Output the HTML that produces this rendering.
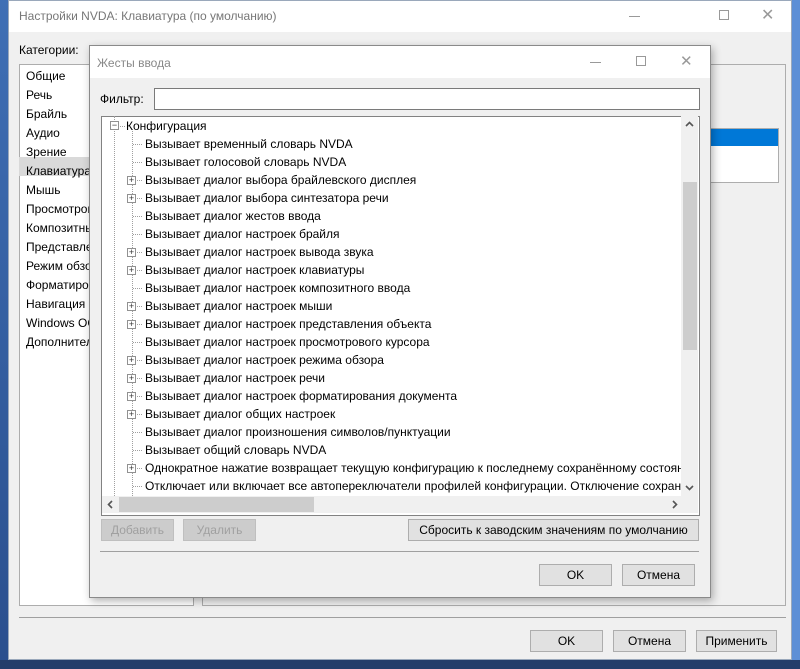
<!DOCTYPE html>
<html><head><meta charset="utf-8"><style>
*{box-sizing:border-box;margin:0;padding:0}
body{width:800px;height:669px;overflow:hidden;position:relative;font-family:"Liberation Sans","DejaVu Sans",sans-serif;font-size:12px;color:#000;background:#1d3660}
.abs{position:absolute}
.btn{position:absolute;background:#e1e1e1;border:1px solid #adadad;text-align:center;line-height:20px;font-size:12px}
.dis{color:#a0a0a0;background:#cccccc;border-color:#bfbfbf}
.row{position:absolute;left:145px;white-space:nowrap;height:18px;line-height:18px}
.pb{position:absolute;left:127px;width:9px;height:9px;border:1px solid #919191;background:#fff;font-size:9px;line-height:7px;text-align:center;color:#333}
.dh{position:absolute;left:133px;width:9px;border-top:1px dotted #a0a0a0}
</style></head><body>
<div class="abs" style="left:0;top:0;width:8px;height:660px;background:linear-gradient(#3f6fb5,#2a4f8e)"></div>
<div class="abs" style="left:792px;top:0;width:8px;height:660px;background:#5d8fd6"></div>
<div class="abs" style="left:0;top:660px;width:800px;height:9px;background:#243e6a"></div>
<div class="abs" style="left:8px;top:0;width:784px;height:660px;background:#f0f0f0;border:1px solid #9aa8bb">
 <div class="abs" style="left:0;top:0;width:782px;height:31px;background:#fff"></div>
 <div class="abs" style="left:10px;top:8px;font-size:12px;color:#777">Настройки NVDA: Клавиатура (по умолчанию)</div>
 <div class="abs" style="left:620px;top:15px;width:11px;border-top:1px solid #999"></div>
 <div class="abs" style="left:710px;top:9px;width:10px;height:10px;border:1px solid #999"></div>
 <div class="abs" style="left:752px;top:4px;font-size:16px;color:#999">✕</div>
 <div class="abs" style="left:10px;top:42px;">Категории:</div>
 <div class="abs" style="left:10px;top:63px;width:175px;height:542px;background:#fff;border:1px solid #adadad"></div>
 <div class="abs" style="left:193px;top:63px;width:584px;height:542px;border:1px solid #adadad"></div>
 <div class="abs" style="left:10px;top:156px;width:80px;height:19px;background:#d9d9d9"></div>
 <div class="abs" style="left:17px;top:66px;line-height:19px;font-size:12px">Общие<br>Речь<br>Брайль<br>Аудио<br>Зрение<br>Клавиатура<br>Мышь<br>Просмотровый<br>Композитный<br>Представление<br>Режим обзора<br>Форматирование<br>Навигация по<br>Windows OCR<br>Дополнительно</div>
 <div class="abs" style="left:690px;top:127px;width:80px;height:55px;border:1px solid #adadad;background:#fff"></div>
 <div class="abs" style="left:691px;top:128px;width:78px;height:17px;background:#0078d7"></div>
 <div class="abs" style="left:10px;top:616px;width:767px;border-top:1px solid #a0a0a0"></div>
 <div class="btn" style="left:521px;top:629px;width:73px;height:22px">OK</div>
 <div class="btn" style="left:604px;top:629px;width:73px;height:22px">Отмена</div>
 <div class="btn" style="left:687px;top:629px;width:81px;height:22px">Применить</div>
</div>
<div class="abs" style="left:89px;top:45px;width:622px;height:553px;background:#f0f0f0;border:1px solid #8a8a8a;box-shadow:2px 3px 8px rgba(0,0,0,.3);overflow:hidden">
 <div class="abs" style="left:0;top:0;width:622px;height:32px;background:#fff"></div>
 <div class="abs" style="left:7px;top:10px;color:#888">Жесты ввода</div>
 <div class="abs" style="left:500px;top:16px;width:11px;border-top:1px solid #999"></div>
 <div class="abs" style="left:546px;top:10px;width:10px;height:10px;border:1px solid #999"></div>
 <div class="abs" style="left:590px;top:6px;font-size:15px;color:#999">✕</div>
 <div class="abs" style="left:10px;top:46px">Фильтр:</div>
 <div class="abs" style="left:64px;top:42px;width:546px;height:22px;background:#fff;border:1px solid #7a7a7a"></div>
 <div class="abs" style="left:11px;top:70px;width:599px;height:400px;background:#fff;border:1px solid #828282"></div>
</div>
<div class="abs" style="left:0;top:0;width:681px;height:496px;overflow:hidden">
<div class="abs" style="left:114px;top:116px;height:380px;border-left:1px dotted #a0a0a0"></div>
<div class="abs" style="left:132px;top:131px;height:365px;border-left:1px dotted #a0a0a0"></div>
<div class="pb" style="left:110px;top:121px">−</div>
<div class="abs" style="left:120px;top:126px;width:5px;border-top:1px dotted #a0a0a0"></div>
<div class="abs" style="left:126px;top:117px;line-height:18px">Конфигурация</div>
<div id="t"></div>
</div>
<script>
var r=[["Вызывает временный словарь NVDA",0],["Вызывает голосовой словарь NVDA",0],["Вызывает диалог выбора брайлевского дисплея",1],["Вызывает диалог выбора синтезатора речи",1],["Вызывает диалог жестов ввода",0],["Вызывает диалог настроек брайля",0],["Вызывает диалог настроек вывода звука",1],["Вызывает диалог настроек клавиатуры",1],["Вызывает диалог настроек композитного ввода",0],["Вызывает диалог настроек мыши",1],["Вызывает диалог настроек представления объекта",1],["Вызывает диалог настроек просмотрового курсора",0],["Вызывает диалог настроек режима обзора",1],["Вызывает диалог настроек речи",1],["Вызывает диалог настроек форматирования документа",1],["Вызывает диалог общих настроек",1],["Вызывает диалог произношения символов/пунктуации",0],["Вызывает общий словарь NVDA",0],["Однократное нажатие возвращает текущую конфигурацию к последнему сохранённому состоянию",1],["Отключает или включает все автопереключатели профилей конфигурации. Отключение сохранения",0]];
var h="";r.forEach(function(x,i){var y=144+18*i;h+='<div class="dh" style="top:'+y+'px"></div>';if(x[1])h+='<div class="pb" style="top:'+(y-4)+'px">+</div>';h+='<div class="row" style="top:'+(y-9)+'px">'+x[0]+'</div>';});
document.getElementById('t').innerHTML=h;
</script>
<div class="abs" style="left:681px;top:116px;width:17px;height:380px;background:#f0f0f0"></div>
<div class="abs" style="left:683px;top:182px;width:14px;height:168px;background:#cdcdcd"></div>
<svg class="abs" style="left:681px;top:116px" width="17" height="380"><path d="M5 10 L8.5 6.5 L12 10" fill="none" stroke="#555" stroke-width="1.6"/><path d="M5 370 L8.5 373.5 L12 370" fill="none" stroke="#555" stroke-width="1.6"/></svg>
<div class="abs" style="left:102px;top:496px;width:596px;height:17px;background:#f0f0f0"></div>
<div class="abs" style="left:119px;top:497px;width:195px;height:15px;background:#cdcdcd"></div>
<svg class="abs" style="left:102px;top:496px" width="596" height="17"><path d="M10 5 L6.5 8.5 L10 12" fill="none" stroke="#555" stroke-width="1.6"/><path d="M571 5 L574.5 8.5 L571 12" fill="none" stroke="#555" stroke-width="1.6"/></svg>
<div class="btn dis" style="left:101px;top:519px;width:73px;height:22px">Добавить</div>
<div class="btn dis" style="left:183px;top:519px;width:73px;height:22px">Удалить</div>
<div class="btn" style="left:408px;top:519px;width:291px;height:22px">Сбросить к заводским значениям по умолчанию</div>
<div class="abs" style="left:100px;top:551px;width:599px;border-top:1px solid #a0a0a0"></div>
<div class="btn" style="left:539px;top:564px;width:73px;height:22px">OK</div>
<div class="btn" style="left:622px;top:564px;width:73px;height:22px">Отмена</div>
</body></html>
